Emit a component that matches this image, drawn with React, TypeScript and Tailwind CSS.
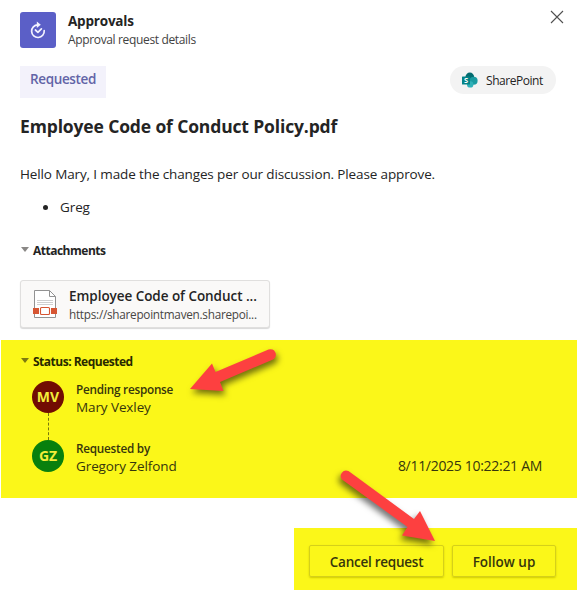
import type { ReactNode } from "react";

// Dialog header: app tile, title, and close glyph.
function Header() {
  return (
    <header className="flex h-12 items-start pt-3 pl-5">
      <div className="flex size-9 items-center justify-center rounded-[3px] bg-[#5b5fc7]">
        <svg width="18" height="18" viewBox="0 0 18 18" fill="none" stroke="#f3f3ff" strokeWidth="1.7">
          <path d="M8.8 3.9A6.3 6.3 0 1 0 15.2 9.6" strokeLinecap="round" />
          <path d="M6.4 9L8.9 11.3L12.4 7.9" strokeLinecap="round" strokeLinejoin="round" />
          <path d="M7.8 0.6L11.8 3.8L7.8 7Z" fill="#f3f3ff" stroke="none" />
        </svg>
      </div>
      <div className="ml-3 flex flex-col">
        <h1 className="h-[19px] text-[13.5px] leading-[19px] font-bold tracking-[-0.2px]">Approvals</h1>
        <p className="text-[12px] leading-[18px] tracking-[-0.35px] text-[#424242]">Approval request details</p>
      </div>
      <button aria-label="Close" className="mr-[13px] ml-auto -mt-[2px]">
        <svg width="14" height="14" viewBox="0 0 14 14" stroke="#505050" strokeWidth="1.1">
          <path d="M1 1L13 13M13 1L1 13" />
        </svg>
      </button>
    </header>
  );
}

function SharePointPill() {
  return (
    <span className="flex h-7 w-[106px] items-center rounded-full bg-[#f3f3f3] pl-[11px]">
      <svg width="17" height="17" viewBox="0 0 17 17">
        <circle cx="8.8" cy="5" r="4.4" fill="#036c70" />
        <circle cx="12.6" cy="8.8" r="4" fill="#1a9ba1" />
        <circle cx="9.2" cy="12.4" r="3.2" fill="#2fb1b8" />
        <rect x="1" y="4.5" width="8" height="8" rx="0.6" fill="#038387" />
        <text x="5" y="11.1" fill="#fff" fontSize="7.5" fontWeight="700" textAnchor="middle">
          S
        </text>
      </svg>
      <span className="mt-[2px] ml-2 text-[12px] leading-4 tracking-[-0.45px]">SharePoint</span>
    </span>
  );
}

function SectionTitle({ children, caret }: { children: ReactNode; caret: string }) {
  return (
    <h3 className="flex h-4 items-center pl-[21px] text-[12px] leading-4 font-bold tracking-[-0.5px]">
      <svg width="8" height="5" viewBox="0 0 8 5" className="mr-1 mb-[3px]">
        <path d="M0 0H8L4 5Z" fill={caret} />
      </svg>
      {children}
    </h3>
  );
}

function AttachmentCard() {
  return (
    <div className="ml-5 flex h-12 w-[250px] rounded-[3px] border border-[#e0dfde] bg-[#faf9f8] pt-[6px] pl-3 shadow-[0_1px_1px_#d8d8d8]">
      <svg width="24" height="29" viewBox="0 0 24 29" className="mt-[3px]" fill="none">
        <path d="M1.5 0.5H16.5L22.5 6.5V27.5H1.5Z" fill="#fff" stroke="#929292" />
        <path d="M16.5 0.5V6.5H22.5" stroke="#929292" />
        <path d="M4 10.5H20M4 12.5H20M4 14.5H20" stroke="#cfcfcf" />
        <path d="M0 18H6V24H0ZM18 18H24V24H18Z" fill="#d65532" />
        <rect x="6" y="16" width="12" height="10" fill="#fff" />
        <rect x="7.5" y="17.5" width="9" height="7" rx="1" stroke="#d65532" strokeWidth="1.1" />
      </svg>
      <div className="ml-3">
        <div className="text-[13.5px] leading-[19px] font-semibold tracking-[-0.05px] whitespace-nowrap">
          Employee Code of Conduct ...
        </div>
        <div className="text-[11.75px] leading-4 tracking-[-0.26px] whitespace-nowrap text-[#484644]">
          https://sharepointmaven.sharepoi...
        </div>
      </div>
    </div>
  );
}

type PersonProps = { initials: string; color: string; label: string; name: string; time?: string };

function Person({ initials, color, label, name, time }: PersonProps) {
  return (
    <div className="flex h-8 items-center pl-8">
      <span
        className="flex size-8 items-center justify-center rounded-full pb-[2px] text-[14px] font-bold text-[#f3ee3a]"
        style={{ background: color }}
      >
        {initials}
      </span>
      <div className="mt-[2px] ml-3 text-[#36350c]">
        <div className="text-[11.75px] leading-4 font-semibold tracking-[-0.25px]">{label}</div>
        <div className="h-[18px] text-[13.5px] leading-[20px] tracking-[-0.1px]">{name}</div>
      </div>
      {time && (
        <span className="mt-[19px] mr-[35px] ml-auto text-[14px] leading-[18px] tracking-[-0.3px] text-[#36350c]">
          {time}
        </span>
      )}
    </div>
  );
}

function ActionButton({ children, className }: { children: ReactNode; className: string }) {
  return (
    <button
      className={`h-8 rounded-[2px] border border-[#d5d01a] pt-[1px] text-[13.5px] leading-5 font-semibold text-[#36350c] shadow-[0_1px_2px_#d0cb00] ${className}`}
    >
      {children}
    </button>
  );
}

// Annotation arrows, drawn on top of the dialog.
function Arrows() {
  return (
    <svg
      width="577"
      height="590"
      viewBox="0 0 577 590"
      className="pointer-events-none absolute top-0 left-0"
      fill="#fd4040"
    >
      <g className="drop-shadow-[2px_4px_3px_rgba(0,0,0,0.55)]">
        <path d="M190 389L212 363.5L215.5 372L268.5 349.5A5.5 5.5 0 0 1 273 359.5L220 382L223.5 391Z" />
      </g>
      <g className="drop-shadow-[-2px_4px_3px_rgba(0,0,0,0.55)]">
        <path d="M435 541L420 511L414 519L348.5 471A5.5 5.5 0 0 0 342 479.5L407.5 527L402 535.5Z" />
      </g>
    </svg>
  );
}

export default function App() {
  return (
    <main className="relative h-[590px] w-[577px] overflow-hidden bg-white font-['Open_Sans','Noto_Sans',sans-serif] text-[#242424]">
      <Header />
      <div className="mt-[18px] flex h-8 items-start justify-between pr-[21px] pl-5">
        <span className="h-8 w-[86px] bg-[#f3f2fb] pt-[3px] text-center text-[13.5px] leading-[20px] font-semibold tracking-[-0.35px] text-[#6264a7]">
          Requested
        </span>
        <SharePointPill />
      </div>
      <h2 className="mt-4 pl-5 text-[17.5px] leading-6 font-bold tracking-[-0.14px]">
        Employee Code of Conduct Policy.pdf
      </h2>
      <p className="mt-[26px] pl-5 text-[13.5px] leading-5 tracking-[-0.13px]">
        Hello Mary, I made the changes per our discussion. Please approve.
      </p>
      <div className="mt-[13px] flex h-5 items-center pl-[43px]">
        <span className="size-[5px] rounded-full bg-[#242424]" />
        <span className="ml-3 text-[13.5px] leading-5 tracking-[-0.1px]">Greg</span>
      </div>
      <div className="mt-[26px]">
        <SectionTitle caret="#8a8886">Attachments</SectionTitle>
      </div>
      <div className="mt-[21px]">
        <AttachmentCard />
      </div>
      <section className="mt-3 ml-px h-[158px] bg-[#fbf719] pt-[14px] text-[#292900]">
        <div className="-ml-px">
          <SectionTitle caret="#7d7a10">Status: Requested</SectionTitle>
          <div className="mt-[11px]">
            <Person initials="MV" color="#720c02" label="Pending response" name="Mary Vexley" />
          </div>
          <div className="ml-12 h-[27px] w-px border-l border-dashed border-[#77750e]" />
          <Person
            initials="GZ"
            color="#08800d"
            label="Requested by"
            name="Gregory Zelfond"
            time="8/11/2025 10:22:21 AM"
          />
        </div>
      </section>
      <footer className="mt-[30px] ml-[294px] flex h-[62px] gap-2 bg-[#fbf719] pt-[17px] pl-[15px]">
        <ActionButton className="w-[135px] tracking-[-0.25px]">Cancel request</ActionButton>
        <ActionButton className="w-[104px] tracking-[0px]">Follow up</ActionButton>
      </footer>
      <Arrows />
    </main>
  );
}
